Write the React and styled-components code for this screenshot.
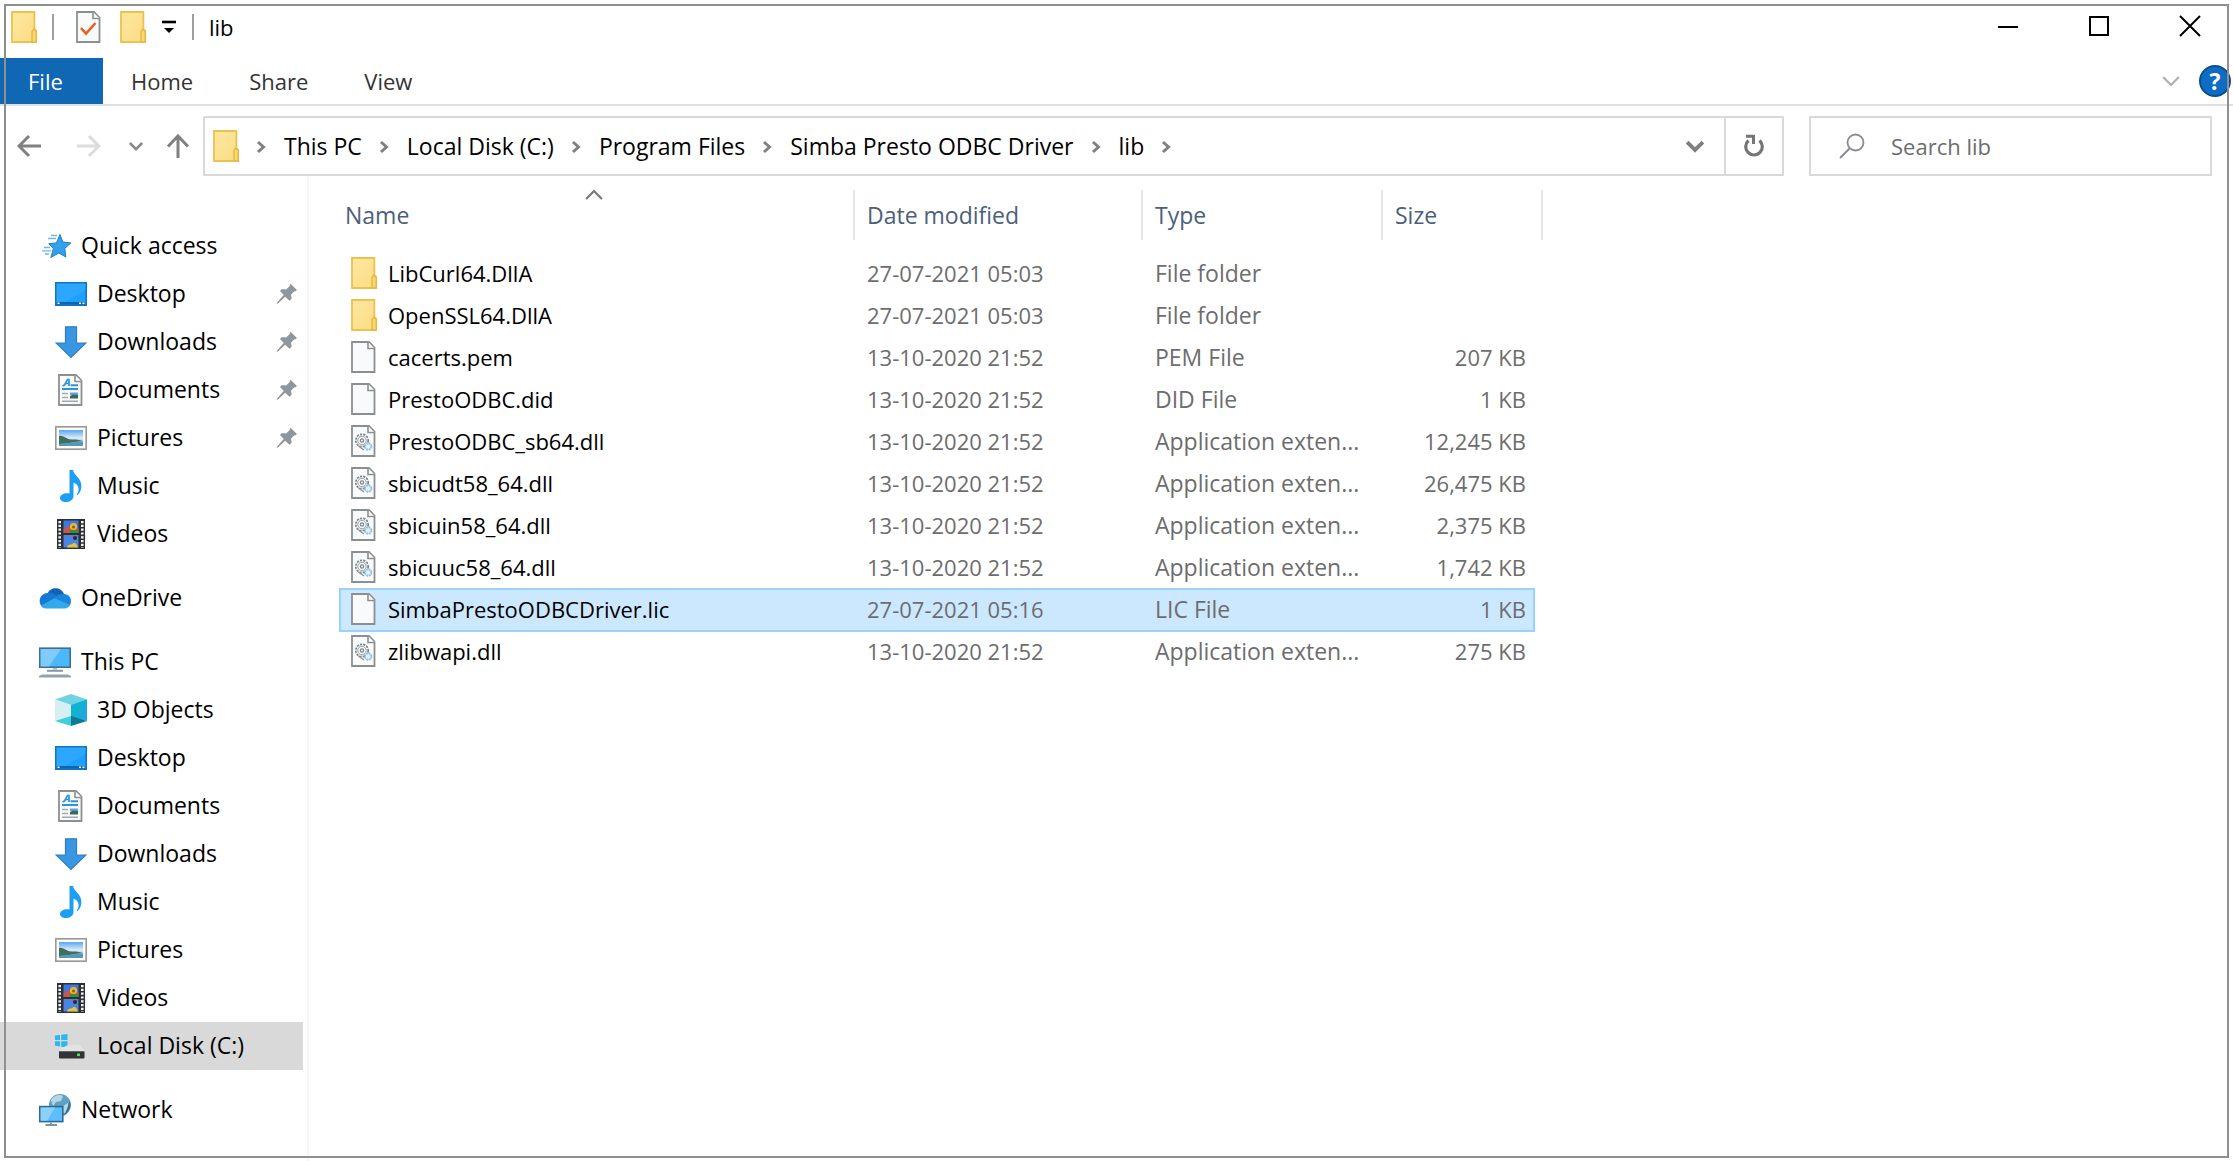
import React from "react";
import styled, { createGlobalStyle, css } from "styled-components";

const GlobalStyle = createGlobalStyle`
  *, *::before, *::after { box-sizing: border-box; }
  body { margin: 0; background: #fff; }
  body, button, input, table {
    font-family: "Open Sans", "Noto Sans", sans-serif;
    font-size: 23px;
    line-height: 30px;
    color: #000;
  }
  button { padding: 0; border: 0; background: none; text-align: left; cursor: pointer; }
  svg { display: block; flex: none; }
`;

/* ---------- icons ---------- */

const FolderIcon = () => (
  <svg width="26" height="32" viewBox="0 0 26 32" aria-hidden="true">
    <defs>
      <linearGradient id="folder" x1="0" y1="0" x2="1" y2="1">
        <stop offset="0" stopColor="#fde7a0" />
        <stop offset="1" stopColor="#fbdc83" />
      </linearGradient>
    </defs>
    <path d="M1 1H23.4V18L25.2 20V31H1Z" fill="url(#folder)" stroke="#e9c34d" strokeWidth="1.8" />
    <path d="M21 31V20.500L23 18 25.200 20.500V31Z" fill="#f8d673" stroke="#e3b93e" strokeWidth="1.400" />
  </svg>
);

const Page = ({ children }) => (
  <svg width="26" height="32" viewBox="0 0 26 32" aria-hidden="true">
    <path d="M1 1H18L23.5 6.5V31H1Z" fill="#f9fafb" stroke="#8c8f8f" strokeWidth="1.8" />
    <path d="M17 1V7.5H23.5" fill="#fff" stroke="#8c8f8f" strokeWidth="1.6" />
    {children}
  </svg>
);

const DllIcon = () => (
  <Page>
    <circle cx="11" cy="15.5" r="6.2" fill="#f4f6f7" stroke="#7d868c" strokeWidth="1.7" strokeDasharray="2.2 1.1" />
    <circle cx="11" cy="15.5" r="4.200" fill="none" stroke="#9aa1a6" strokeWidth="1" />
    <circle cx="11" cy="15.5" r="1.6" fill="none" stroke="#7d868c" strokeWidth="1.2" />
    <path d="M7.500 21l5.500 4" stroke="#8d959a" strokeWidth="1.5" />
    <circle cx="17.2" cy="21.5" r="3.2" fill="#e4f2fb" stroke="#8fbfe0" strokeWidth="1.9" strokeDasharray="1.8 .7" />
  </Page>
);

const CheckPageIcon = () => (
  <Page>
    <path d="M5 17l5 5.5L19.5 12" fill="none" stroke="#e8601c" strokeWidth="2.6" />
  </Page>
);

const DocumentIcon = () => (
  <Page>
    <path d="M4.500 12l2-1 3-5.500h1.500V12M7 9.500h4" fill="none" stroke="#2b95dc" strokeWidth="1.700" />
    <path d="M12.500 11.200h7.500M4 15h16" stroke="#2b95dc" strokeWidth="2" />
    <path d="M4 19.500h6M4 23.500h6M4 27.300h16" stroke="#a6a9ab" strokeWidth="1.600" />
    <path d="M12 18.500h8v2.500h-8z" fill="#5aa3ee" />
    <path d="M12 22l3-1.500 5 .5v3.500h-8z" fill="#3c6a52" />
  </Page>
);

const StarIcon = () => (
  <svg width="32" height="32" viewBox="0 0 32 32" aria-hidden="true">
    <path d="M21 4.500l2.800 7.500 8 .9-6 5.500 1 8.600-7-4-8 4.500 2.600-8.800-4.600-5 7.600-.8z" fill="#35a0ea" stroke="#1d7fc4" strokeWidth="1" />
    <path d="M12 5.500h6M9 8.500h8M5 17.500h6M3 20.800h9M6 24h4" stroke="#6db7ea" strokeWidth="1.300" />
  </svg>
);

const DesktopIcon = () => (
  <svg width="32" height="32" viewBox="0 0 32 32" aria-hidden="true">
    <rect x=".8" y="4.800" width="30.400" height="22.400" fill="#1fa0fb" stroke="#1076c0" strokeWidth="1.600" />
    <path d="M30.400 5.600V12L10 24.200H1.600V5.600z" fill="#35acff" opacity=".6" />
    <path d="M1.500 24h29v2.600h-29z" fill="#0c67ad" />
    <path d="M2.500 24.500h2v1.600h-2zM24 24.500h2v1.600h-2zM27.500 24.500h2v1.600h-2z" fill="#fff" />
  </svg>
);

const DownloadIcon = () => (
  <svg width="32" height="32" viewBox="0 0 32 32" aria-hidden="true">
    <path d="M10.500 .8h11V17H31L16 31.400 1 17h9.500z" fill="#3b96e2" stroke="#2b7fc8" strokeWidth="1.200" />
  </svg>
);

const PictureIcon = () => (
  <svg width="32" height="32" viewBox="0 0 32 32" aria-hidden="true">
    <defs>
      <linearGradient id="sky" x1="0" y1="0" x2="0" y2="1">
        <stop offset="0" stopColor="#5ba5f4" />
        <stop offset=".5" stopColor="#dcecfa" />
        <stop offset="1" stopColor="#7fb1d2" />
      </linearGradient>
    </defs>
    <rect x=".8" y="4.800" width="30.400" height="22.400" fill="#fff" stroke="#9a9a9a" strokeWidth="1.700" />
    <rect x="4" y="8" width="24" height="16" fill="url(#sky)" />
    <path d="M4 14c4-1 7 3 12 3.500 4-.3 7 0 12 1.500-8 1-16 2.500-24 3z" fill="#3f6f5f" />
    <path d="M4 22c8-.6 16-2.200 24-2.600V24H4z" fill="#5b95bb" />
  </svg>
);

const MusicIcon = () => (
  <svg width="32" height="32" viewBox="0 0 32 32" aria-hidden="true">
    <path d="M14.500 0H18c.6 5 8.700 8 8.400 16.500-.1 4-2 7-3.900 8.500-.6 0-.8-.5-.4-1 3-4.500 1.500-9.500-3.600-11.500V26c-.3 4-4 6-7.500 6S5 30.500 5 28c0-3 4-5.200 9.500-4.600z" fill="#1e9df7" />
  </svg>
);

const VideoIcon = () => (
  <svg width="32" height="32" viewBox="0 0 32 32" aria-hidden="true">
    <rect x="2" y="1" width="28" height="30" fill="#2d2f33" />
    <path d="M4.700 3v27M27.300 3v27" stroke="#f2f2f2" strokeWidth="2.600" strokeDasharray="2.200 1.600" />
    <rect x="8.500" y="2.500" width="15" height="12.500" fill="#3f78dc" />
    <rect x="8.500" y="17" width="15" height="12.500" fill="#4a85e4" />
    <path d="M8.500 11l5-3 4 3 6-1v5h-15z" fill="#c4584a" />
    <path d="M15 12h8.500v3H15z" fill="#3d8a3a" />
    <circle cx="18.500" cy="8.500" r="3.600" fill="#e9b92c" />
    <circle cx="18.500" cy="9" r="1.500" fill="#8b5b14" />
    <circle cx="20" cy="20" r="2" fill="#3a2616" />
    <path d="M12 29.500c1-4 4-2 6-4s4 1 5 4z" fill="#e9c03a" />
  </svg>
);

const CloudIcon = () => (
  <svg width="32" height="32" viewBox="0 0 32 32" aria-hidden="true">
    <path d="M8.500 11.500C11 4.500 22 4 25 12l-7 6z" fill="#1262b8" />
    <path d="M8.500 11c4-.8 7 1 9.500 3l-12 12C-1 25-2 12 8.500 11z" fill="#1679d2" />
    <path d="M25 12c5 0 7 4 7 7.500 0 1.500-.5 3-1.500 4L15 16.500c3-4 7-4.500 10-4.500z" fill="#1b86dc" />
    <path d="M2 23.500L15.500 16.300 31 23c-1 2.300-3 3.400-5 3.400H7c-2 0-4-1-5-2.900z" fill="#31a9ec" />
  </svg>
);

const PcIcon = () => (
  <svg width="32" height="32" viewBox="0 0 32 32" aria-hidden="true">
    <rect x=".8" y="2.200" width="30.400" height="19" fill="#4db7fb" stroke="#3d6f91" strokeWidth="1.600" />
    <path d="M1.600 3H22L10 20.400H1.600z" fill="#8dd0fd" opacity=".8" />
    <path d="M8 24.800h16" stroke="#8b98a4" strokeWidth="2" />
    <path d="M14 22h4v2h-4z" fill="#b9c3cb" />
    <path d="M0 30L3 28.500H29L32 30V31.500H0z" fill="#93a1b0" />
  </svg>
);

const CubeIcon = () => (
  <svg width="32" height="32" viewBox="0 0 32 32" aria-hidden="true">
    <path d="M16 0L32 5.500 16 11 0 5.500z" fill="#6fd3e2" />
    <path d="M0 5.500L16 11V23L0 27z" fill="#d6eff3" />
    <path d="M32 5.500L16 11V23L32 27z" fill="#1ea9dd" />
    <path d="M16 11V23L23 24 32 5.500z" fill="#12b2d3" />
    <path d="M0 27L16 22V32z" fill="#41cfdb" />
    <path d="M32 27L16 22V32z" fill="#0c7a94" />
  </svg>
);

const DiskIcon = () => (
  <svg width="32" height="32" viewBox="0 0 32 32" aria-hidden="true">
    <path d="M0 5.500l5-.6V10H0zM6.200 4.700L12.500 4V10H6.200zM0 11.200H5V16.500L0 15.800zM6.200 11.200H12.500V17.500L6.200 16.700z" fill="#2bb8f0" />
    <path d="M13 15h12l4.500 6H4l3-3z" fill="#e3e3e3" />
    <rect x="4" y="21" width="25.500" height="7.500" rx="1" fill="#333" />
    <path d="M4.500 21.500h24.500" stroke="#666" />
    <rect x="22" y="23.500" width="3" height="2.600" fill="#3bea4b" />
  </svg>
);

const NetworkIcon = () => (
  <svg width="32" height="32" viewBox="0 0 32 32" aria-hidden="true">
    <circle cx="21" cy="11" r="11" fill="#5fa0c4" />
    <path d="M12 6c3-5 9-6 12-4l-2 5-5 1-3 4zM24 12l5-3 2 6-4 5-4-2z" fill="#b5d6e6" />
    <path d="M30.500 7c2 5 0 12-6 14.500 3-4 4-8 6-14.500z" fill="#356f92" />
    <rect x=".8" y="12.600" width="23" height="15" fill="#5cbffb" stroke="#2f6a90" strokeWidth="1.600" />
    <path d="M1.600 13.400H16L8 26.800H1.600z" fill="#98d6fd" opacity=".8" />
    <path d="M6.500 31h11.500M12 28.500v2" stroke="#7c93a6" strokeWidth="1.800" />
  </svg>
);

const PinIcon = () => (
  <svg width="22" height="22" viewBox="0 0 22 22" aria-hidden="true">
    <path d="M14.500 .8L21 7l-1.800 1.500-1-.2-3.200 3.500.7 4-2.200 1.900-4.300-4L2 20.500.8 21 .9 19.700 7.700 12 4 8l2-2 4 .6L13.300 3.500z" fill="#8d979e" />
  </svg>
);

const Chevron = ({ dir = "right", size = 16, color = "#808080", weight = 2 }) => {
  const d = { right: "M5 3L10.500 8 5 13", down: "M1 4.500L8 11.500 15 4.500", up: "M1 11.500L8 4.500 15 11.500" }[dir];
  return (
    <svg width={size} height={size} viewBox="0 0 16 16" aria-hidden="true">
      <path d={d} fill="none" stroke={color} strokeWidth={weight} />
    </svg>
  );
};

const ArrowIcon = ({ d, color }) => (
  <svg width="24" height="24" viewBox="0 0 24 24" aria-hidden="true">
    <path d={d} fill="none" stroke={color} strokeWidth="3" />
  </svg>
);

/* ---------- layout ---------- */

const Window = styled.div`
  position: relative;
  display: flex;
  flex-direction: column;
  min-height: 100vh;
`;

const Frame = styled.div`
  position: absolute;
  inset: 4px 4px 3px;
  border: 2px solid #8f8f8f;
  pointer-events: none;
`;

const TitleBar = styled.header`
  display: flex;
  align-items: flex-start;
  height: 58px;
  padding: 11px 0 0 11px;
`;

const QuickTools = styled.div`
  display: flex;
  align-items: center;
  gap: 15px;
  flex: 1;
`;

const ToolButtons = styled.div`
  display: flex;
  align-items: center;
  gap: 18px;
  padding-left: 7px;
`;

const ToolSeparator = styled.span`
  width: 2px;
  height: 26px;
  background: #a0a0a0;
`;

const Title = styled.h1`
  margin: 0;
  font-size: 22px;
  font-weight: 400;
`;

const WindowButton = styled.button`
  display: flex;
  justify-content: flex-end;
  width: 91px;
  padding: 4px 32px 0 0;
`;

const Ribbon = styled.nav`
  display: flex;
  height: 48px;
  border-bottom: 2px solid #e0e0e0;
`;

const Tab = styled.button`
  height: 46px;
  padding: 0 28px;
  font-size: 22px;
  color: #333;
  ${(p) => p.$primary && css`
    width: 103px;
    background: #1067b3;
    color: #fff;
  `}
`;

const RibbonEnd = styled.div`
  display: flex;
  align-items: center;
  gap: 19px;
  margin-left: auto;
  padding-right: 2px;
`;

const HelpButton = styled.button`
  width: 32px;
  height: 32px;
  border: 2px solid #0c4f8d;
  border-radius: 50%;
  background: #0f6cc4;
  color: #fff;
  font-weight: 700;
  line-height: 28px;
  text-align: center;
`;

const NavBar = styled.div`
  display: flex;
  align-items: stretch;
  height: 70px;
  padding: 10px 21px 0 17px;
`;

const History = styled.div`
  display: grid;
  grid-template-columns: 60px 52px 37px 37px;
  align-items: center;
`;

const Address = styled.div`
  display: flex;
  align-items: center;
  flex: 1;
  min-width: 0;
  padding-left: 8px;
  border: 2px solid #d9d9d9;
`;

const Crumbs = styled.ol`
  display: flex;
  align-items: center;
  flex: 1;
  margin: 0;
  padding: 0 0 0 14px;
  list-style: none;
  white-space: nowrap;
`;

const Crumb = styled.li`
  display: flex;
  align-items: center;
`;

const CrumbArrow = styled.button`
  width: 16px;
  margin: 0 15px 0 14px;
  padding-top: 2px;
  &:first-child { margin-left: 0; }
`;

const AddressButton = styled.button`
  display: grid;
  place-items: center;
  align-self: stretch;
  width: 58px;
  ${(p) => p.$divided && css`border-left: 2px solid #d9d9d9;`}
`;

const Search = styled.label`
  display: flex;
  align-items: center;
  flex: 0 1 403px;
  gap: 26px;
  margin-left: 25px;
  padding-left: 28px;
  border: 2px solid #d9d9d9;
`;

const SearchInput = styled.input`
  flex: 1;
  min-width: 0;
  padding: 0;
  border: 0;
  outline: 0;
  background: none;
  font-size: 22px;
  &::placeholder { color: #6d6d6d; opacity: 1; }
`;

const Body = styled.div`
  display: flex;
  flex: 1;
`;

const Sidebar = styled.aside`
  width: 309px;
  flex: none;
  padding: 46px 4px 0 0;
  border-right: 2px solid #f6f6f6;
`;

const Group = styled.ul`
  margin: 0 0 16px;
  padding: 0;
  list-style: none;
`;

const Place = styled.button`
  display: flex;
  align-items: center;
  gap: 10px;
  width: 100%;
  height: 48px;
  padding: 0 5px 0 ${(p) => (p.$child ? 55 : 39)}px;
  background: ${(p) => (p.$selected ? "#d9d9d9" : "transparent")};
`;

const PlaceName = styled.span`
  flex: 1;
  padding-bottom: 2px;
`;

const Files = styled.main`
  flex: 1;
  min-width: 0;
  padding: 14px 0 0 31px;
`;

const Table = styled.table`
  width: 1194px;
  table-layout: fixed;
  border-collapse: collapse;
`;

const Th = styled.th`
  width: ${(p) => p.$width}px;
  padding: 0 0 13px;
  font-weight: 400;
`;

const HeadButton = styled.button`
  position: relative;
  display: block;
  width: ${(p) => (p.$last ? "calc(100% + 9px)" : "100%")};
  height: 50px;
  padding-left: ${(p) => (p.$first ? 5 : 12)}px;
  border-right: 2px solid #e5e5e5;
  color: #4c607a;
`;

const SortMark = styled.span`
  position: absolute;
  top: -4px;
  left: calc(50% - 12px);
`;

const Row = styled.tr`
  height: 42px;
  ${(p) => p.$selected && css`
    background: #cce8ff;
    outline: 2px solid #99d1ff;
    outline-offset: -1px;
  `}
`;

const Td = styled.td`
  padding: 0 8px 2px 12px;
  overflow: hidden;
  color: #6d6d6d;
  font-size: ${(p) => (p.$compact ? 22 : 23)}px;
  text-align: ${(p) => (p.$right ? "right" : "left")};
  white-space: nowrap;
`;

const NameCell = styled(Td)`
  padding-left: 11px;
  color: #000;
`;

const FileName = styled.div`
  display: flex;
  align-items: center;
  gap: 11px;
`;

/* ---------- data ---------- */

const GROUPS = [
  [
    ["Quick access", StarIcon],
    ["Desktop", DesktopIcon, "pinned"],
    ["Downloads", DownloadIcon, "pinned"],
    ["Documents", DocumentIcon, "pinned"],
    ["Pictures", PictureIcon, "pinned"],
    ["Music", MusicIcon],
    ["Videos", VideoIcon],
  ],
  [["OneDrive", CloudIcon]],
  [
    ["This PC", PcIcon],
    ["3D Objects", CubeIcon],
    ["Desktop", DesktopIcon],
    ["Documents", DocumentIcon],
    ["Downloads", DownloadIcon],
    ["Music", MusicIcon],
    ["Pictures", PictureIcon],
    ["Videos", VideoIcon],
    ["Local Disk (C:)", DiskIcon, "selected"],
  ],
  [["Network", NetworkIcon]],
];

const IconBox = styled.span`
  display: grid;
  place-items: center;
  width: 32px;
  height: 32px;
`;

const CRUMBS = ["This PC", "Local Disk (C:)", "Program Files", "Simba Presto ODBC Driver", "lib"];

const COLUMNS = [["Name", 515], ["Date modified", 288], ["Type", 240], ["Size", 151]];

const FILES = [
  ["LibCurl64.DllA", "27-07-2021 05:03", "File folder", "", FolderIcon],
  ["OpenSSL64.DllA", "27-07-2021 05:03", "File folder", "", FolderIcon],
  ["cacerts.pem", "13-10-2020 21:52", "PEM File", "207 KB", Page],
  ["PrestoODBC.did", "13-10-2020 21:52", "DID File", "1 KB", Page],
  ["PrestoODBC_sb64.dll", "13-10-2020 21:52", "Application exten...", "12,245 KB", DllIcon],
  ["sbicudt58_64.dll", "13-10-2020 21:52", "Application exten...", "26,475 KB", DllIcon],
  ["sbicuin58_64.dll", "13-10-2020 21:52", "Application exten...", "2,375 KB", DllIcon],
  ["sbicuuc58_64.dll", "13-10-2020 21:52", "Application exten...", "1,742 KB", DllIcon],
  ["SimbaPrestoODBCDriver.lic", "27-07-2021 05:16", "LIC File", "1 KB", Page],
  ["zlibwapi.dll", "13-10-2020 21:52", "Application exten...", "275 KB", DllIcon],
];

export default function App() {
  return (
    <Window>
      <GlobalStyle />
      <TitleBar>
        <QuickTools>
          <FolderIcon />
          <ToolSeparator />
          <ToolButtons>
            <button aria-label="Properties"><CheckPageIcon /></button>
            <button aria-label="New folder"><FolderIcon /></button>
          </ToolButtons>
          <button aria-label="Customize toolbar">
            <svg width="16" height="16" viewBox="0 0 16 16" aria-hidden="true">
              <path d="M1 3h14" stroke="#000" strokeWidth="2.600" />
              <path d="M3 9h10l-5 5z" fill="#000" />
            </svg>
          </button>
          <ToolSeparator />
          <Title>lib</Title>
        </QuickTools>
        <WindowButton aria-label="Minimize">
          <svg width="22" height="22" viewBox="0 0 22 22"><path d="M1 12h20" stroke="#000" strokeWidth="2" /></svg>
        </WindowButton>
        <WindowButton aria-label="Maximize">
          <svg width="22" height="22" viewBox="0 0 22 22"><rect x="2" y="2" width="18" height="18" fill="none" stroke="#000" strokeWidth="2" /></svg>
        </WindowButton>
        <WindowButton aria-label="Close">
          <svg width="22" height="22" viewBox="0 0 22 22"><path d="M1 1l20 20M21 1L1 21" stroke="#000" strokeWidth="2" /></svg>
        </WindowButton>
      </TitleBar>
      <Ribbon>
        <Tab $primary>File</Tab>
        <Tab>Home</Tab>
        <Tab>Share</Tab>
        <Tab>View</Tab>
        <RibbonEnd>
          <button aria-label="Expand ribbon"><Chevron dir="down" size={18} color="#b0b0b0" /></button>
          <HelpButton aria-label="Help">?</HelpButton>
        </RibbonEnd>
      </Ribbon>
      <NavBar>
        <History>
          <button aria-label="Back"><ArrowIcon d="M24 12H3M12 2L2 12 12 22" color="#808080" /></button>
          <button aria-label="Forward"><ArrowIcon d="M0 12H21M12 2l10 10L12 22" color="#dcdcdc" /></button>
          <button aria-label="Recent locations"><Chevron dir="down" size={14} color="#8a8a8a" weight={3} /></button>
          <button aria-label="Up"><ArrowIcon d="M12 24V3M2 12.500L12 2 22 12.500" color="#808080" /></button>
        </History>
        <Address>
          <FolderIcon />
          <Crumbs>
            {CRUMBS.map((name, i) => (
              <Crumb key={name}>
                {i === 0 && <CrumbArrow aria-label="Locations"><Chevron weight={3} /></CrumbArrow>}
                <button>{name}</button>
                <CrumbArrow aria-label={`Folders in ${name}`}><Chevron weight={3} /></CrumbArrow>
              </Crumb>
            ))}
          </Crumbs>
          <AddressButton aria-label="Previous locations"><Chevron dir="down" size={18} weight={3.4} /></AddressButton>
          <AddressButton $divided aria-label="Refresh">
            <svg width="22" height="24" viewBox="0 0 22 24" aria-hidden="true">
              <path d="M16.500 6.500A8.300 8.300 0 1 1 5.500 6.500" fill="none" stroke="#757575" strokeWidth="3.200" />
              <path d="M3 2.200H10.500V10" fill="none" stroke="#757575" strokeWidth="3" />
            </svg>
          </AddressButton>
        </Address>
        <Search>
          <svg width="26" height="26" viewBox="0 0 26 26" aria-hidden="true">
            <circle cx="16.500" cy="9.500" r="8" fill="none" stroke="#8a8a96" strokeWidth="1.800" />
            <path d="M10.500 15.500L1 25" stroke="#8a8a96" strokeWidth="2" />
          </svg>
          <SearchInput placeholder="Search lib" aria-label="Search lib" />
        </Search>
      </NavBar>
      <Body>
        <Sidebar>
          {GROUPS.map((group) => (
            <Group key={group[0][0]}>
              {group.map(([name, Icon, state], i) => (
                <li key={name}>
                  <Place $child={i > 0} $selected={state === "selected"}>
                    <IconBox><Icon /></IconBox>
                    <PlaceName>{name}</PlaceName>
                    {state === "pinned" && <PinIcon />}
                  </Place>
                </li>
              ))}
            </Group>
          ))}
        </Sidebar>
        <Files>
          <Table>
            <thead>
              <tr>
                {COLUMNS.map(([name, width], i) => (
                  <Th key={name} $width={width} scope="col">
                    <HeadButton $first={i === 0} $last={i === 3}>
                      {name}
                      {i === 0 && <SortMark><Chevron dir="up" size={18} color="#7a7a7a" /></SortMark>}
                    </HeadButton>
                  </Th>
                ))}
              </tr>
            </thead>
            <tbody>
              {FILES.map(([name, date, type, size, Icon]) => (
                <Row key={name} $selected={name.endsWith(".lic")}>
                  <NameCell $compact><FileName><Icon />{name}</FileName></NameCell>
                  <Td $compact>{date}</Td>
                  <Td>{type}</Td>
                  <Td $compact $right>{size}</Td>
                </Row>
              ))}
            </tbody>
          </Table>
        </Files>
      </Body>
      <Frame />
    </Window>
  );
}
